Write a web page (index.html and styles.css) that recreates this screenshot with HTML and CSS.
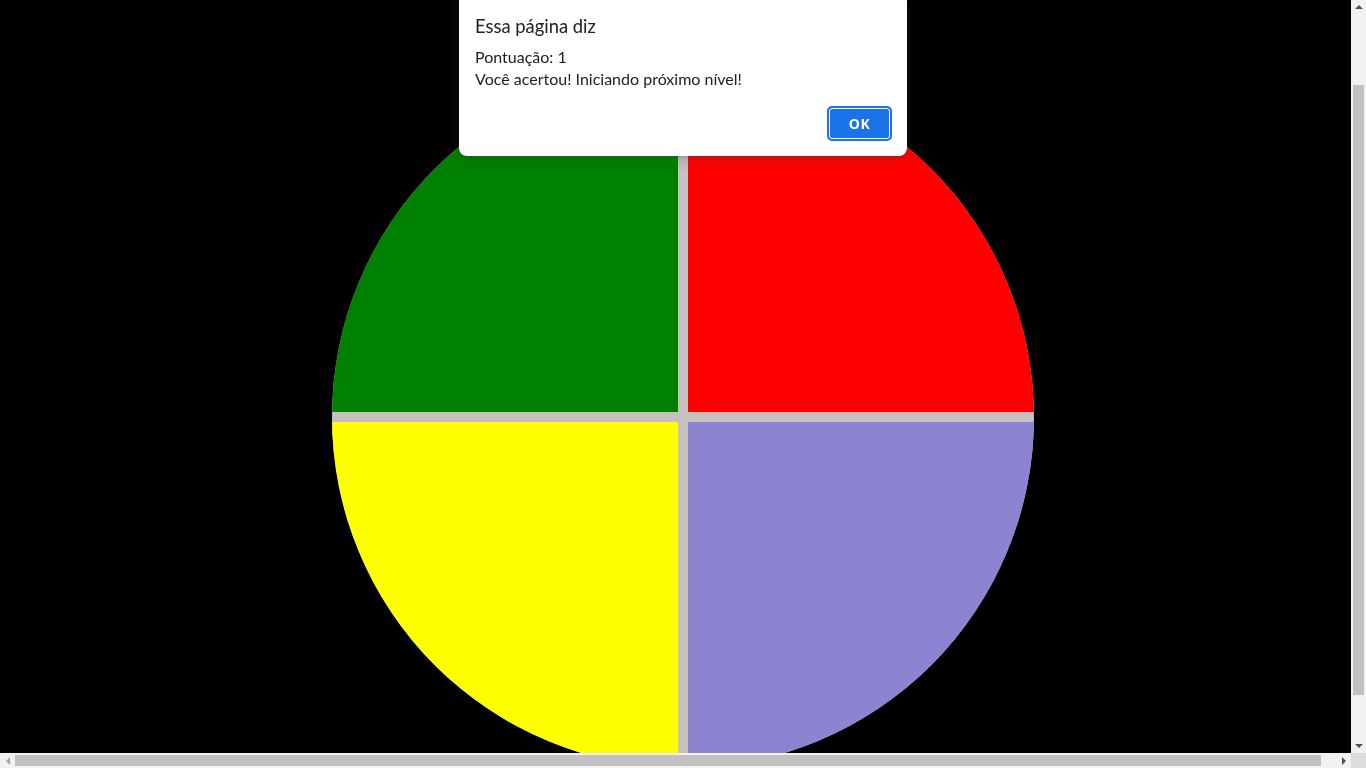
FILE: index.html
```html
<!DOCTYPE html>
<html lang="pt-BR">
<head>
<meta charset="utf-8">
<title>Genius</title>
<link rel="stylesheet" href="styles.css">
</head>
<body>
<div class="window">
  <main class="viewport">
    <div class="stage">
      <div class="genius">
        <div class="pad pad-green"></div>
        <div class="pad pad-red"></div>
        <div class="pad pad-yellow"></div>
        <div class="pad pad-blue"></div>
      </div>
    </div>
  </main>
  <div class="vscroll">
    <span class="arrow arrow-up"></span>
    <div class="vtrack"><div class="vthumb"></div></div>
    <span class="arrow arrow-down"></span>
  </div>
  <div class="hscroll">
    <span class="arrow arrow-left"></span>
    <div class="htrack"><div class="hthumb"></div></div>
    <span class="arrow arrow-right"></span>
  </div>
  <div class="corner"></div>
</div>
<div class="alert" role="alertdialog">
  <div class="alert-title">Essa página diz</div>
  <div class="alert-msg">Pontuação: 1<br>Você acertou! Iniciando próximo nível!</div>
  <div class="alert-actions"><button class="alert-ok">OK</button></div>
</div>
</body>
</html>
```

FILE: styles.css
```css
html, body {
  margin: 0;
  padding: 0;
  background: #000;
  overflow: hidden;
}

.window {
  width: 100vw;
  height: 100vh;
  display: grid;
  grid-template-columns: 1fr 15px;
  grid-template-rows: 1fr 15px;
}

.viewport {
  overflow: hidden;
  background: #000;
}

.stage {
  width: 1366px;
  padding-top: 66px;
  display: flex;
  justify-content: center;
}

.genius {
  width: 702px;
  height: 702px;
  flex: none;
  border-radius: 50%;
  overflow: hidden;
  background: #c8c0c0;
  display: grid;
  grid-template-columns: 1fr 1fr;
  grid-template-rows: 1fr 1fr;
  gap: 10px;
}

.pad-green { background: #008000; }
.pad-red { background: #ff0000; }
.pad-yellow { background: #ffff00; }
.pad-blue { background: #8b85d1; }

/* scrollbars */
.vscroll {
  background: #f1f1f1;
  display: flex;
  flex-direction: column;
  align-items: center;
}
.vtrack {
  flex: 1;
  width: 100%;
  padding: 70px 2px 43px;
  box-sizing: border-box;
  display: flex;
}
.vthumb {
  flex: 1;
  background: #c1c1c1;
}
.hscroll {
  background: #f1f1f1;
  display: flex;
  align-items: center;
}
.htrack {
  flex: 1;
  height: 100%;
  padding: 2px 15px 2px 0;
  box-sizing: border-box;
  display: flex;
}
.hthumb {
  flex: 1;
  background: #c1c1c1;
}
.corner {
  background: #dcdcdc;
}
.arrow {
  flex: none;
  width: 15px;
  height: 15px;
  display: flex;
  align-items: center;
  justify-content: center;
}
.arrow::before {
  content: "";
  width: 0;
  height: 0;
  border-style: solid;
}
.arrow-up::before {
  border-width: 0 4px 4px 4px;
  border-color: transparent transparent #505050 transparent;
  margin-top: -1px;
}
.arrow-down::before {
  border-width: 4px 4px 0 4px;
  border-color: #505050 transparent transparent transparent;
  margin-top: 1px;
}
.arrow-left::before {
  border-width: 4px 4px 4px 0;
  border-color: transparent #a3a3a3 transparent transparent;
}
.arrow-right::before {
  border-width: 4px 0 4px 4px;
  border-color: transparent transparent transparent #505050;
}

/* alert dialog */
.alert {
  position: fixed;
  top: 0;
  left: 459px;
  width: 448px;
  height: 156px;
  box-sizing: border-box;
  background: #fff;
  border-radius: 0 0 8px 8px;
  box-shadow: 0 1px 3px rgba(60, 64, 67, 0.3), 0 4px 8px 3px rgba(60, 64, 67, 0.15);
  padding: 14px 16px 16px;
  font-family: "Lato", "Noto Sans", sans-serif;
  color: #202124;
  display: flex;
  flex-direction: column;
}

.alert-title {
  font-size: 18.4px;
  line-height: 24px;
}

.alert-msg {
  margin-top: 8px;
  font-size: 16px;
  line-height: 22px;
}

.alert-actions {
  margin-top: auto;
  display: flex;
  justify-content: flex-end;
}

.alert-ok {
  width: 65px;
  height: 35px;
  box-sizing: border-box;
  background: #1a73e8;
  color: #fff;
  border: 2px solid #1a73e8;
  box-shadow: inset 0 0 0 1px #fff;
  border-radius: 5px;
  font-family: "Open Sans", "Noto Sans", sans-serif;
  font-weight: 700;
  font-size: 14px;
  letter-spacing: 0.5px;
  margin-right: -1px;
  margin-bottom: -1px;
}
```
